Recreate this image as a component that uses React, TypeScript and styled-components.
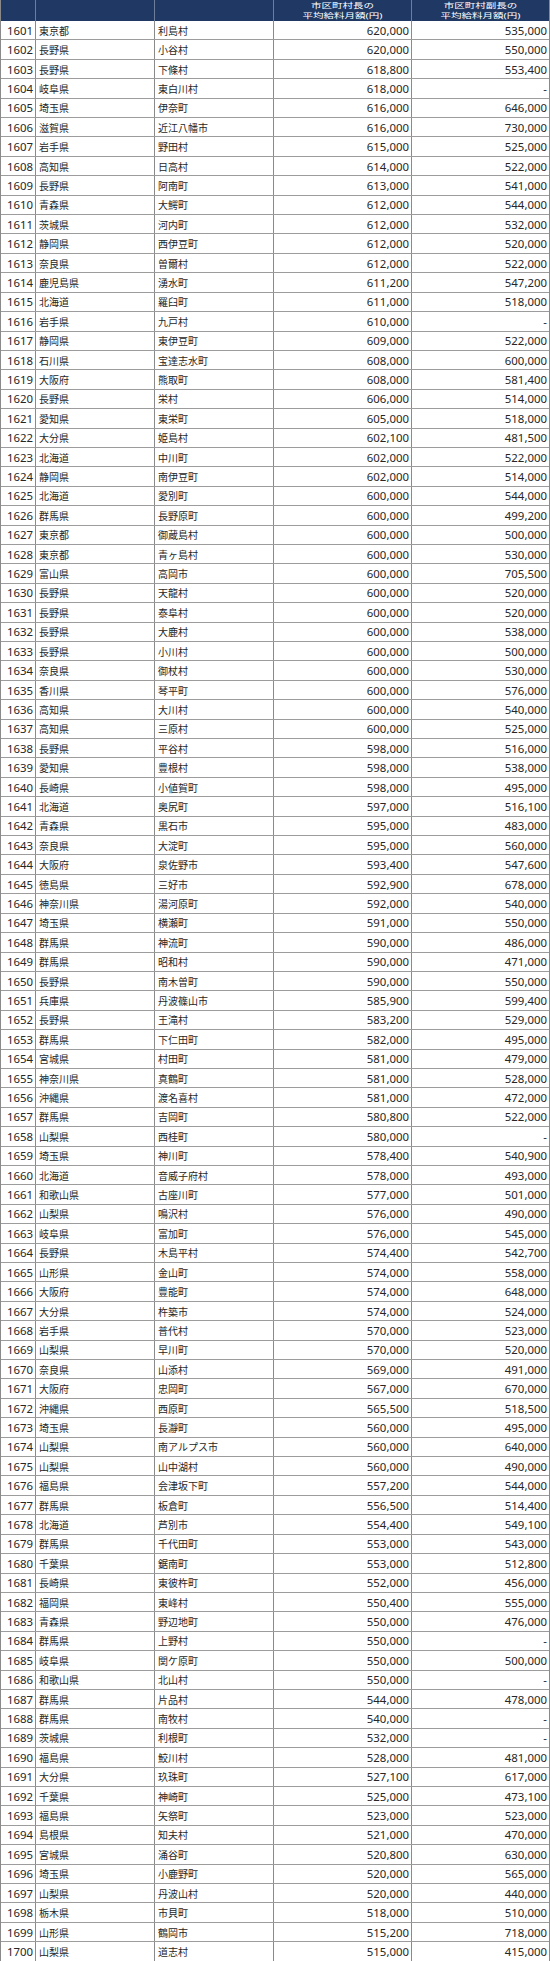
import React from "react";
import styled, { createGlobalStyle } from "styled-components";

const GlobalStyle = createGlobalStyle`
  body {
    margin: 0;
    background: #fff;
    font-family: "Noto Sans", "Noto Sans CJK JP", sans-serif;
  }
`;

const RAW = `1601 東京都 利島村 620,000 535,000
1602 長野県 小谷村 620,000 550,000
1603 長野県 下條村 618,800 553,400
1604 岐阜県 東白川村 618,000 -
1605 埼玉県 伊奈町 616,000 646,000
1606 滋賀県 近江八幡市 616,000 730,000
1607 岩手県 野田村 615,000 525,000
1608 高知県 日高村 614,000 522,000
1609 長野県 阿南町 613,000 541,000
1610 青森県 大鰐町 612,000 544,000
1611 茨城県 河内町 612,000 532,000
1612 静岡県 西伊豆町 612,000 520,000
1613 奈良県 曽爾村 612,000 522,000
1614 鹿児島県 湧水町 611,200 547,200
1615 北海道 羅臼町 611,000 518,000
1616 岩手県 九戸村 610,000 -
1617 静岡県 東伊豆町 609,000 522,000
1618 石川県 宝達志水町 608,000 600,000
1619 大阪府 熊取町 608,000 581,400
1620 長野県 栄村 606,000 514,000
1621 愛知県 東栄町 605,000 518,000
1622 大分県 姫島村 602,100 481,500
1623 北海道 中川町 602,000 522,000
1624 静岡県 南伊豆町 602,000 514,000
1625 北海道 愛別町 600,000 544,000
1626 群馬県 長野原町 600,000 499,200
1627 東京都 御蔵島村 600,000 500,000
1628 東京都 青ヶ島村 600,000 530,000
1629 富山県 高岡市 600,000 705,500
1630 長野県 天龍村 600,000 520,000
1631 長野県 泰阜村 600,000 520,000
1632 長野県 大鹿村 600,000 538,000
1633 長野県 小川村 600,000 500,000
1634 奈良県 御杖村 600,000 530,000
1635 香川県 琴平町 600,000 576,000
1636 高知県 大川村 600,000 540,000
1637 高知県 三原村 600,000 525,000
1638 長野県 平谷村 598,000 516,000
1639 愛知県 豊根村 598,000 538,000
1640 長崎県 小値賀町 598,000 495,000
1641 北海道 奥尻町 597,000 516,100
1642 青森県 黒石市 595,000 483,000
1643 奈良県 大淀町 595,000 560,000
1644 大阪府 泉佐野市 593,400 547,600
1645 徳島県 三好市 592,900 678,000
1646 神奈川県 湯河原町 592,000 540,000
1647 埼玉県 横瀬町 591,000 550,000
1648 群馬県 神流町 590,000 486,000
1649 群馬県 昭和村 590,000 471,000
1650 長野県 南木曽町 590,000 550,000
1651 兵庫県 丹波篠山市 585,900 599,400
1652 長野県 王滝村 583,200 529,000
1653 群馬県 下仁田町 582,000 495,000
1654 宮城県 村田町 581,000 479,000
1655 神奈川県 真鶴町 581,000 528,000
1656 沖縄県 渡名喜村 581,000 472,000
1657 群馬県 吉岡町 580,800 522,000
1658 山梨県 西桂町 580,000 -
1659 埼玉県 神川町 578,400 540,900
1660 北海道 音威子府村 578,000 493,000
1661 和歌山県 古座川町 577,000 501,000
1662 山梨県 鳴沢村 576,000 490,000
1663 岐阜県 富加町 576,000 545,000
1664 長野県 木島平村 574,400 542,700
1665 山形県 金山町 574,000 558,000
1666 大阪府 豊能町 574,000 648,000
1667 大分県 杵築市 574,000 524,000
1668 岩手県 普代村 570,000 523,000
1669 山梨県 早川町 570,000 520,000
1670 奈良県 山添村 569,000 491,000
1671 大阪府 忠岡町 567,000 670,000
1672 沖縄県 西原町 565,500 518,500
1673 埼玉県 長瀞町 560,000 495,000
1674 山梨県 南アルプス市 560,000 640,000
1675 山梨県 山中湖村 560,000 490,000
1676 福島県 会津坂下町 557,200 544,000
1677 群馬県 板倉町 556,500 514,400
1678 北海道 芦別市 554,400 549,100
1679 群馬県 千代田町 553,000 543,000
1680 千葉県 鋸南町 553,000 512,800
1681 長崎県 東彼杵町 552,000 456,000
1682 福岡県 東峰村 550,400 555,000
1683 青森県 野辺地町 550,000 476,000
1684 群馬県 上野村 550,000 -
1685 岐阜県 関ケ原町 550,000 500,000
1686 和歌山県 北山村 550,000 -
1687 群馬県 片品村 544,000 478,000
1688 群馬県 南牧村 540,000 -
1689 茨城県 利根町 532,000 -
1690 福島県 鮫川村 528,000 481,000
1691 大分県 玖珠町 527,100 617,000
1692 千葉県 神崎町 525,000 473,100
1693 福島県 矢祭町 523,000 523,000
1694 島根県 知夫村 521,000 470,000
1695 宮城県 涌谷町 520,800 630,000
1696 埼玉県 小鹿野町 520,000 565,000
1697 山梨県 丹波山村 520,000 440,000
1698 栃木県 市貝町 518,000 510,000
1699 山形県 鶴岡市 515,200 718,000
1700 山梨県 道志村 515,000 415,000`;

type RowType = {
  rank: string;
  pref: string;
  city: string;
  mayor: string;
  deputy: string;
};

const rows: RowType[] = RAW.split("\n").map((line) => {
  const [rank, pref, city, mayor, deputy] = line.split(" ");
  return { rank, pref, city, mayor, deputy };
});

const COLS = "35px 119px 119px 138px 1fr";

const Table = styled.div`
  width: 550px;
  border-left: 1px solid #8a8a8a;
  border-right: 1px solid #8a8a8a;
  box-sizing: border-box;
`;

const HeaderRow = styled.div`
  display: grid;
  grid-template-columns: ${COLS};
  height: 21px;
  background: #1f3864;
  overflow: hidden;
`;

const HeaderCell = styled.div`
  border-right: 1px solid rgba(255, 255, 255, 0.35);
  &:last-child {
    border-right: none;
  }
`;

// header labels are squashed vertically in the original
const HeaderLabel = styled.div`
  color: #fff;
  font-size: 10.5px;
  line-height: 15px;
  text-align: center;
  white-space: nowrap;
  transform: scaleY(0.66);
  transform-origin: center top;
  margin-top: 0.5px;
`;

const Row = styled.div`
  display: grid;
  grid-template-columns: ${COLS};
  height: 19.41px;
  box-sizing: border-box;
  border-bottom: 1px solid #9c9c9c;
`;

const Cell = styled.div<{ $align?: "left" | "right"; $cjk?: boolean }>`
  display: flex;
  align-items: center;
  justify-content: ${(p) => (p.$align === "right" ? "flex-end" : "flex-start")};
  padding: ${(p) => (p.$align === "right" ? "0 2px 0 0" : "0 0 0 3px")};
  border-right: 1px solid #8a8a8a;
  color: #262626;
  font-size: ${(p) => (p.$cjk ? "10px" : "11.4px")};
  white-space: nowrap;
  overflow: hidden;
  &:last-child {
    border-right: none;
  }
`;

const App = () => {
  return (
    <>
      <GlobalStyle />
      <Table>
        <HeaderRow>
          <HeaderCell />
          <HeaderCell />
          <HeaderCell />
          <HeaderCell>
            <HeaderLabel>
              市区町村長の
              <br />
              平均給料月額(円)
            </HeaderLabel>
          </HeaderCell>
          <HeaderCell>
            <HeaderLabel>
              市区町村副長の
              <br />
              平均給料月額(円)
            </HeaderLabel>
          </HeaderCell>
        </HeaderRow>
        {rows.map((r) => (
          <Row key={r.rank}>
            <Cell $align="right">{r.rank}</Cell>
            <Cell $cjk>{r.pref}</Cell>
            <Cell $cjk>{r.city}</Cell>
            <Cell $align="right">{r.mayor}</Cell>
            <Cell $align="right">{r.deputy}</Cell>
          </Row>
        ))}
      </Table>
    </>
  );
};

export default App;
